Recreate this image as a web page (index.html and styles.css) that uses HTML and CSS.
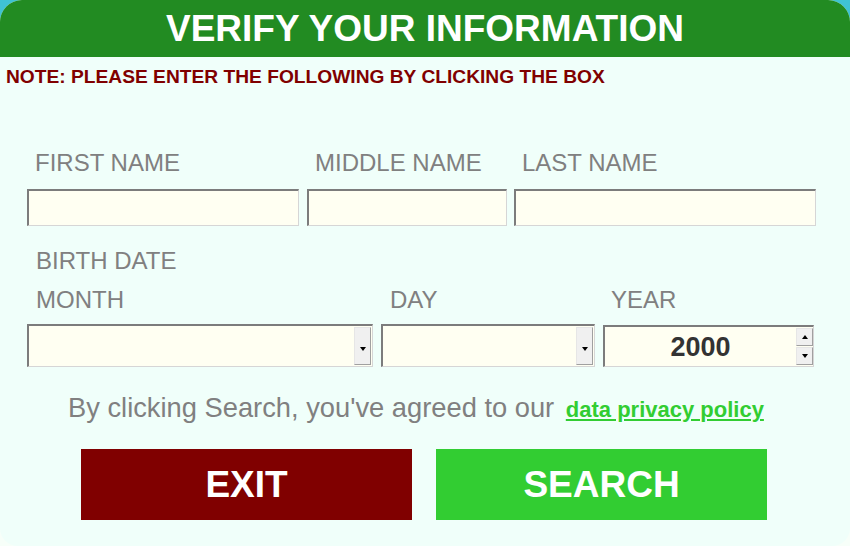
FILE: index.html
```html
<!DOCTYPE html>
<html lang="en">
<head>
<meta charset="utf-8">
<title>Verify Your Information</title>
<link rel="stylesheet" href="styles.css">
</head>
<body>
<div class="card">
  <header class="header"><h1 class="title">VERIFY YOUR INFORMATION</h1></header>
  <p class="note">NOTE: PLEASE ENTER THE FOLLOWING BY CLICKING THE BOX</p>

  <div class="names">
    <div class="field f-first">
      <label class="label">FIRST NAME</label>
      <input class="textbox" type="text">
    </div>
    <div class="field f-middle">
      <label class="label">MIDDLE NAME</label>
      <input class="textbox" type="text">
    </div>
    <div class="field f-last">
      <label class="label">LAST NAME</label>
      <input class="textbox" type="text">
    </div>
  </div>

  <div class="label birth">BIRTH DATE</div>

  <div class="dates">
    <div class="field f-month">
      <label class="label label-d">MONTH</label>
      <div class="combo"><span class="combo-btn"><span class="tri-down"></span></span></div>
    </div>
    <div class="field f-day">
      <label class="label label-d">DAY</label>
      <div class="combo"><span class="combo-btn"><span class="tri-down"></span></span></div>
    </div>
    <div class="field f-year">
      <label class="label">YEAR</label>
      <div class="spinner">
        <span class="spin-value">2000</span>
        <span class="spin-btns">
          <span class="spin-btn"><span class="tri-up"></span></span>
          <span class="spin-btn"><span class="tri-down"></span></span>
        </span>
      </div>
    </div>
  </div>

  <p class="agree">By clicking Search, you've agreed to our <a class="policy" href="#">data privacy policy</a></p>

  <div class="actions">
    <button class="btn btn-exit">EXIT</button>
    <button class="btn btn-search">SEARCH</button>
  </div>
</div>
</body>
</html>
```

FILE: styles.css
```css
* { box-sizing: border-box; }
html, body { margin: 0; padding: 0; }
body {
  width: 850px;
  height: 546px;
  background: linear-gradient(#3fc3d3 0, #3fc3d3 40px, #f7fff9 40px);
  font-family: "Liberation Sans", Arial, sans-serif;
  overflow: hidden;
}
.card {
  width: 850px;
  height: 546px;
  background: #f0fffa;
  border-radius: 22px 22px 18px 18px;
  overflow: hidden;
}
.header {
  height: 57px;
  background: #228b22;
  display: flex;
  align-items: center;
  justify-content: center;
}
.title {
  margin: 0;
  color: #ffffff;
  font-size: 37px;
  font-weight: bold;
  line-height: 57px;
}
.note {
  margin: 9px 0 0 6px;
  color: #800000;
  font-size: 19.2px;
  font-weight: bold;
  line-height: 22px;
}
.label {
  display: block;
  color: #808080;
  font-size: 24px;
  line-height: 28px;
  padding-left: 8px;
}
.names {
  display: grid;
  grid-template-columns: 272px 200px 301px;
  column-gap: 8px;
  padding-left: 27px;
  margin-top: 61px;
}
.f-last { margin-left: -1px; }
.field { display: flex; flex-direction: column; }
.textbox {
  display: block;
  margin-top: 12px;
  width: 100%;
  height: 37px;
  background: #fffff2;
  border-style: solid;
  border-width: 2px 1px 1px 2px;
  border-color: #7c7c7c #d6d6d6 #d6d6d6 #7c7c7c;
  outline: none;
  padding: 0;
}
.birth {
  margin-left: 28px;
  margin-top: 21px;
}
.dates {
  display: grid;
  grid-template-columns: 346px 214px 211px;
  column-gap: 8px;
  padding-left: 27px;
  margin-top: 11px;
}
.label-d { padding-left: 9px; }
.combo {
  margin-top: 10px;
  height: 43px;
  background: #fffff2;
  border-style: solid;
  border-width: 2px 1px 1px 2px;
  border-color: #7c7c7c #d6d6d6 #d6d6d6 #7c7c7c;
  display: flex;
  justify-content: flex-end;
  padding: 1px 1px 1px 0;
}
.combo-btn {
  width: 17px;
  height: 100%;
  background: #f0f0f0;
  border: 1px solid #a0a0a0;
  border-top-color: #e6e6e6;
  border-left-color: #e6e6e6;
  display: flex;
  align-items: center;
  justify-content: center;
  padding-top: 6px;
}
.tri-down {
  width: 0; height: 0;
  border-left: 3.5px solid transparent;
  border-right: 3.5px solid transparent;
  border-top: 4px solid #000;
}
.tri-up {
  width: 0; height: 0;
  border-left: 3.5px solid transparent;
  border-right: 3.5px solid transparent;
  border-bottom: 4px solid #000;
}
.spinner {
  margin-top: 11px;
  height: 42px;
  background: #fffff2;
  border-style: solid;
  border-width: 2px 1px 1px 2px;
  border-color: #7c7c7c #d6d6d6 #d6d6d6 #7c7c7c;
  display: flex;
  align-items: stretch;
}
.spin-value {
  flex: 1;
  display: flex;
  align-items: center;
  justify-content: center;
  color: #333333;
  font-size: 27px;
  font-weight: bold;
  padding-top: 2px;
}
.spin-btns {
  width: 17px;
  display: flex;
  flex-direction: column;
  gap: 1px;
  padding: 1px 0;
}
.spin-btn {
  flex: 1;
  background: #f0f0f0;
  border: 1px solid #a0a0a0;
  border-top-color: #e6e6e6;
  border-left-color: #e6e6e6;
  display: flex;
  align-items: center;
  justify-content: center;
}
.agree {
  margin: 25px 0 0 68px;
  color: #808080;
  font-size: 27.3px;
  line-height: 32px;
  white-space: nowrap;
}
.policy {
  margin-left: 4px;
  color: #32cd32;
  font-size: 22px;
  font-weight: bold;
  text-decoration: underline;
}
.actions {
  display: flex;
  justify-content: center;
  gap: 24px;
  margin-top: 23px;
  padding-right: 2px;
}
.btn {
  width: 331px;
  height: 71px;
  border: none;
  color: #ffffff;
  font-family: "Liberation Sans", Arial, sans-serif;
  font-size: 37px;
  font-weight: bold;
  padding: 0;
}
.btn-exit { background: #800000; }
.btn-search { background: #32cd32; }
```
